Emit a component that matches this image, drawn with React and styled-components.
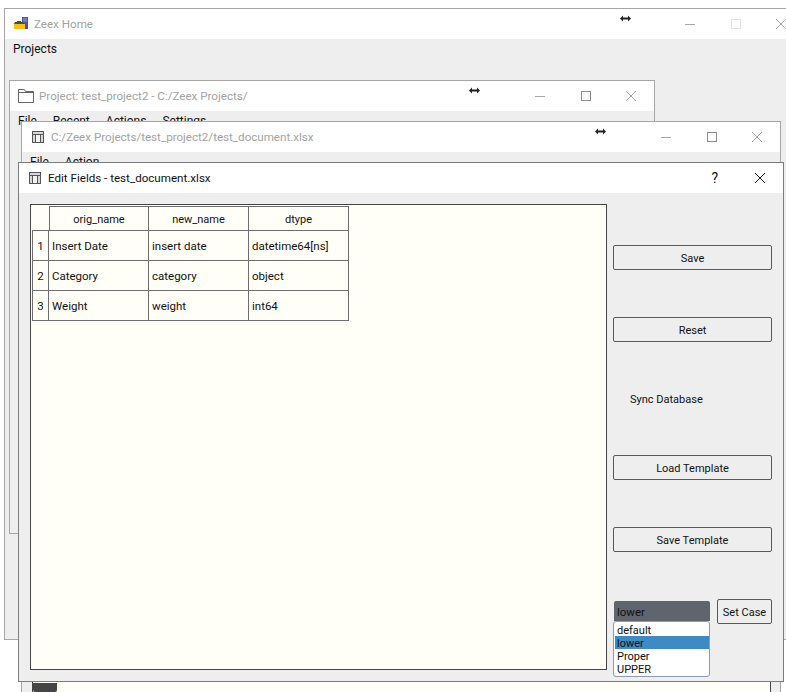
import React from "react";
import styled, { createGlobalStyle } from "styled-components";

const GlobalStyle = createGlobalStyle`
  html, body {
    margin: 0;
    padding: 0;
    background: #fff;
    overflow: hidden;
  }
  body {
    font-family: Roboto, "Open Sans", "Liberation Sans", sans-serif;
    font-size: 11.5px;
    color: #111;
  }
`;

const Desktop = styled.div`
  position: relative;
  width: 786px;
  height: 692px;
  overflow: hidden;
  background: #fff;
`;

// windows sit on a free canvas, so these are placed by coordinates
const Window = styled.div`
  position: absolute;
  top: ${(p) => p.$top}px;
  left: ${(p) => p.$left}px;
  width: ${(p) => p.$width}px;
  height: ${(p) => p.$height}px;
  box-sizing: border-box;
  display: flex;
  flex-direction: column;
  background: #eeeeee;
  border: 1px solid ${(p) => (p.$active ? "#7c7c7c" : "#a6a6a6")};
`;

const TitleBar = styled.div`
  position: relative;
  flex: none;
  height: 30px;
  box-sizing: border-box;
  padding-left: ${(p) => p.$inset}px;
  display: flex;
  align-items: center;
  background: #fff;
  font-size: 11.6px;
  color: ${(p) => (p.$active ? "#111" : "#a3a3a3")};
`;

const TitleText = styled.span`
  flex: 1;
  white-space: nowrap;
  padding-bottom: 1px;
`;

const TitleIcon = styled.svg`
  flex: none;
  margin-right: ${(p) => p.$gap}px;
`;

const WinButton = styled.div`
  flex: none;
  width: 45.5px;
  height: 30px;
  display: flex;
  align-items: center;
  justify-content: center;
  font-size: 14px;
  color: #111;
`;

const ResizeCursor = styled.svg`
  position: absolute;
  top: ${(p) => p.$top}px;
  left: ${(p) => p.$left}px;
`;

const MenuBar = styled.div`
  flex: none;
  height: 19px;
  box-sizing: border-box;
  padding: 1px 0 0 ${(p) => p.$inset}px;
  display: flex;
  align-items: center;
  gap: ${(p) => p.$gap}px;
  font-size: 12px;
  color: #111;
`;

const DocBody = styled.div`
  flex: 1;
  min-height: 0;
  display: flex;
  padding: 0 9px 3px 10px;
`;

const DocPanel = styled.div`
  flex: 1;
  display: flex;
  align-items: flex-end;
  background: #fffff8;
  border-left: 1px solid #444;
  border-right: 1px solid #444;
`;

const DarkTab = styled.div`
  width: 24px;
  height: 9px;
  background: #454545;
  border-radius: 0 0 2px 2px;
`;

const DialogBody = styled.div`
  flex: 1;
  min-height: 0;
  display: flex;
  gap: 6px;
  padding: 11px;
`;

const TableFrame = styled.div`
  flex: 1;
  box-sizing: border-box;
  padding: 1px 0 0 1px;
  background: #fffff8;
  border: 1px solid #444;
`;

const TableRow = styled.div`
  display: flex;
  height: ${(p) => p.$height}px;
`;

const Corner = styled.div`
  width: 17px;
  box-sizing: border-box;
  border-bottom: 1px solid #6e6e6e;
`;

const ColumnHead = styled.div`
  width: 100px;
  box-sizing: border-box;
  padding-top: 1px;
  display: flex;
  align-items: center;
  justify-content: center;
  font-size: 11px;
  border: 1px solid #6e6e6e;
  border-left-width: ${(p) => (p.$first ? 1 : 0)}px;
`;

const RowHead = styled.div`
  width: 17px;
  box-sizing: border-box;
  display: flex;
  align-items: center;
  justify-content: center;
  border: 1px solid #6e6e6e;
  border-top: 0;
`;

const Cell = styled.div`
  width: 100px;
  box-sizing: border-box;
  padding-left: 3px;
  display: flex;
  align-items: center;
  white-space: nowrap;
  border-right: 1px solid #6e6e6e;
  border-bottom: 1px solid #6e6e6e;
`;

const SidePanel = styled.div`
  flex: none;
  width: 159px;
  padding-top: 41px;
  display: flex;
  flex-direction: column;
  gap: 47px;
`;

const PushButton = styled.button`
  width: ${(p) => p.$width || "100%"};
  height: 25px;
  flex: none;
  padding: 1px 0 0;
  box-sizing: border-box;
  background: #eeeeee;
  border: 1px solid #585858;
  border-radius: 2px;
  font: inherit;
  font-size: 11px;
  color: #111;
`;

const SyncLabel = styled.div`
  height: 19px;
  padding-left: 17px;
  line-height: 21px;
  font-size: 11px;
`;

const CaseRow = styled.div`
  display: flex;
  gap: 7px;
`;

const ComboWrap = styled.div`
  position: relative;
  width: 97px;
  padding-top: 2px;
`;

const ComboValue = styled.div`
  height: 20px;
  margin-left: 1px;
  padding-left: 3px;
  box-sizing: border-box;
  line-height: 23px;
  background: #60646f;
  border-radius: 2px 2px 0 0;
  color: #111;
`;

const ComboPopup = styled.div`
  position: absolute;
  top: 22px;
  left: 0;
  width: 97px;
  box-sizing: border-box;
  padding: 1px 0 1px 1px;
  background: #fff;
  border: 1px solid #8f9bb0;
  border-radius: 3px;
  z-index: 2;
`;

const ComboOption = styled.div`
  height: 13px;
  line-height: 15px;
  padding-left: 2px;
  font-size: 11px;
  background: ${(p) => (p.$selected ? "#3d8ac7" : "transparent")};
`;

const HomeIcon = () => (
  <TitleIcon $gap={6} width="14" height="14" viewBox="0 0 14 14">
    <rect x="8" y="0" width="6" height="12" fill="#4a55a8" />
    <path d="M9 2h4M9 4h4" stroke="#9aa2dc" strokeWidth="1" />
    <path d="M0 7 L1 5 H3 V4 H7 V5 H9 L11 7 Z" fill="#4c4a44" />
    <rect x="0" y="7" width="11" height="5" fill="#f2c21a" />
  </TitleIcon>
);

const FolderIcon = () => (
  <TitleIcon $gap={5} width="16" height="14" viewBox="0 0 16 14">
    <path
      d="M0.5 13.5 V0.5 H6.5 L7.5 2.5 H15.5 V13.5 Z M0.5 3.5 H15.5"
      fill="none"
      stroke="#666"
      strokeWidth="1"
    />
  </TitleIcon>
);

const TableIcon = () => (
  <TitleIcon $gap={7} width="12" height="12" viewBox="0 0 12 12">
    <rect x="0.5" y="0.5" width="11" height="11" fill="#d8d8d8" stroke="#555" />
    <path d="M1 3.5 H11" stroke="#555" strokeWidth="1" />
    <rect x="3" y="4" width="6" height="7" fill="#f4f4f4" />
    <path d="M3.5 3.5 V11 M8.5 3.5 V11" stroke="#555" strokeWidth="1" />
  </TitleIcon>
);

const MinGlyph = ({ color }) => (
  <svg width="10" height="10" viewBox="0 0 10 10">
    <path d="M0 5.5 H10" stroke={color} strokeWidth="1" />
  </svg>
);

const MaxGlyph = ({ color }) => (
  <svg width="10" height="10" viewBox="0 0 10 10">
    <rect x="0.5" y="0.5" width="9" height="9" fill="none" stroke={color} />
  </svg>
);

const CloseGlyph = ({ color }) => (
  <svg width="10" height="10" viewBox="0 0 10 10">
    <path d="M0 0 L10 10 M10 0 L0 10" stroke={color} strokeWidth="1" />
  </svg>
);

const WinControls = ({ color, maxColor }) => (
  <>
    <WinButton>
      <MinGlyph color={color} />
    </WinButton>
    <WinButton>
      <MaxGlyph color={maxColor || color} />
    </WinButton>
    <WinButton>
      <CloseGlyph color={color} />
    </WinButton>
  </>
);

// the mouse-resize cursor caught in each title bar
const Cursor = ({ left }) => (
  <ResizeCursor $top={6} $left={left} width="11" height="7" viewBox="0 0 11 7">
    <path d="M0 3.5 L3 0.5 V2.5 H8 V0.5 L11 3.5 L8 6.5 V4.5 H3 V6.5 Z" fill="#222" />
  </ResizeCursor>
);

const columns = ["orig_name", "new_name", "dtype"];
const rows = [
  ["Insert Date", "insert date", "datetime64[ns]"],
  ["Category", "category", "object"],
  ["Weight", "weight", "int64"],
];
const caseOptions = ["default", "lower", "Proper", "UPPER"];

export default function App() {
  return (
    <Desktop>
      <GlobalStyle />

      <Window $top={8} $left={4} $width={801} $height={632}>
        <TitleBar $inset={9}>
          <HomeIcon />
          <TitleText>Zeex Home</TitleText>
          <Cursor left={615} />
          <WinControls color="#a8a8a8" maxColor="#e2e2e2" />
        </TitleBar>
        <MenuBar $inset={8} $gap={0}>
          <span>Projects</span>
        </MenuBar>
      </Window>

      <Window $top={80} $left={9} $width={646} $height={454}>
        <TitleBar $inset={8}>
          <FolderIcon />
          <TitleText>Project: test_project2 - C:/Zeex Projects/</TitleText>
          <Cursor left={459} />
          <WinControls color="#a8a8a8" maxColor="#8c8c8c" />
        </TitleBar>
        <MenuBar $inset={8} $gap={16}>
          <span>File</span>
          <span>Recent</span>
          <span>Actions</span>
          <span>Settings</span>
        </MenuBar>
      </Window>

      <Window $top={121} $left={21} $width={760} $height={575}>
        <TitleBar $inset={10}>
          <TableIcon />
          <TitleText>C:/Zeex Projects/test_project2/test_document.xlsx</TitleText>
          <Cursor left={573} />
          <WinControls color="#a8a8a8" maxColor="#8c8c8c" />
        </TitleBar>
        <MenuBar $inset={8} $gap={16}>
          <span>File</span>
          <span>Action</span>
        </MenuBar>
        <DocBody>
          <DocPanel>
            <DarkTab />
          </DocPanel>
        </DocBody>
      </Window>

      <Window $active $top={162} $left={18} $width={766} $height={520}>
        <TitleBar $active $inset={10}>
          <TableIcon />
          <TitleText>Edit Fields - test_document.xlsx</TitleText>
          <WinButton>?</WinButton>
          <WinButton>
            <CloseGlyph color="#111" />
          </WinButton>
        </TitleBar>
        <DialogBody>
          <TableFrame>
            <TableRow $height={25}>
              <Corner />
              {columns.map((name, i) => (
                <ColumnHead key={name} $first={i === 0}>
                  {name}
                </ColumnHead>
              ))}
            </TableRow>
            {rows.map((row, i) => (
              <TableRow key={row[0]} $height={30}>
                <RowHead>{i + 1}</RowHead>
                {row.map((value) => (
                  <Cell key={value}>{value}</Cell>
                ))}
              </TableRow>
            ))}
          </TableFrame>

          <SidePanel>
            <PushButton>Save</PushButton>
            <PushButton>Reset</PushButton>
            <SyncLabel>Sync Database</SyncLabel>
            <PushButton>Load Template</PushButton>
            <PushButton>Save Template</PushButton>
            <CaseRow>
              <ComboWrap>
                <ComboValue>lower</ComboValue>
                <ComboPopup>
                  {caseOptions.map((opt) => (
                    <ComboOption key={opt} $selected={opt === "lower"}>
                      {opt}
                    </ComboOption>
                  ))}
                </ComboPopup>
              </ComboWrap>
              <PushButton $width="55px">Set Case</PushButton>
            </CaseRow>
          </SidePanel>
        </DialogBody>
      </Window>
    </Desktop>
  );
}
